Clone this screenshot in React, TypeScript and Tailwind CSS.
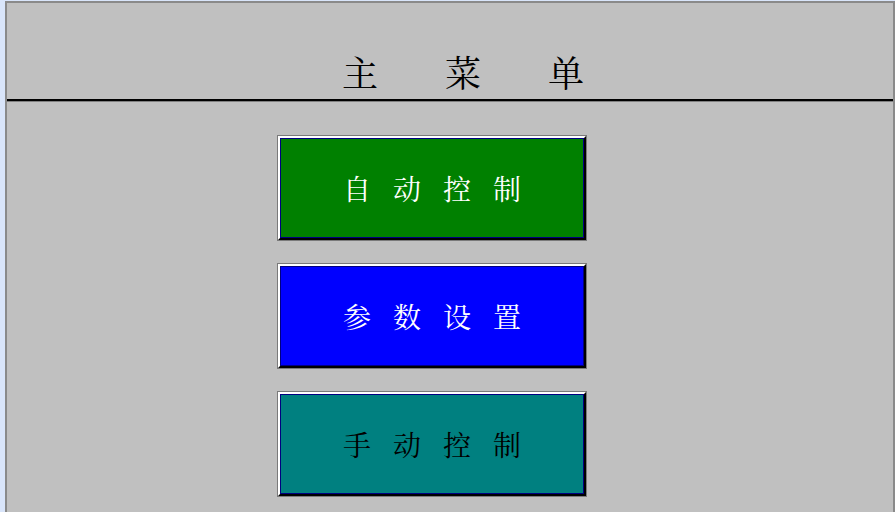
import React from 'react';

interface MenuButtonProps {
  label: string;
  fill: string;
  textColor: string;
}

const cjkFont = '"Noto Serif CJK SC", "Noto Sans CJK SC", serif';

const MenuButton: React.FC<MenuButtonProps> = ({ label, fill, textColor }) => (
  <div className="w-[310px] h-[106px] border border-[#7a7a7a]">
    <div className="w-full h-full border-t-2 border-l-2 border-white border-r-2 border-b-2 border-r-black border-b-black">
      <div className={`w-full h-full border border-[#000080] flex items-center justify-center ${fill}`}>
        <span
          className={`pl-[22px] text-[28px] leading-[28px] tracking-[22px] ${textColor}`}
          style={{ fontFamily: cjkFont }}
        >
          {label}
        </span>
      </div>
    </div>
  </div>
);

const App: React.FC = () => {
  const buttons = [
    { label: '自动控制', fill: 'bg-[#008000]', textColor: 'text-white' },
    { label: '参数设置', fill: 'bg-[#0000ff]', textColor: 'text-white' },
    { label: '手动控制', fill: 'bg-[#008080]', textColor: 'text-black' },
  ];

  return (
    <div className="w-[895px] h-[512px] overflow-hidden flex bg-[#d9e5fa]">
      <div className="ml-[5px] mt-[1px] flex-1 flex flex-col bg-[#c0c0c0] border-l-2 border-t-2 border-r-2 border-[#8a8a8a]">
        {/* Header */}
        <div className="h-[98px] flex items-end pb-[9px] pl-[335px] border-b-2 border-black">
          <span
            className="text-[36px] leading-[36px] tracking-[67px] text-black"
            style={{ fontFamily: cjkFont }}
          >
            主菜单
          </span>
        </div>
        <div className="h-px bg-[#808080]" />

        {/* Buttons */}
        <div className="flex flex-col gap-[22px] pt-[33px] pl-[270px]">
          {buttons.map((b) => (
            <MenuButton key={b.label} {...b} />
          ))}
        </div>
      </div>
    </div>
  );
};

export default App;
